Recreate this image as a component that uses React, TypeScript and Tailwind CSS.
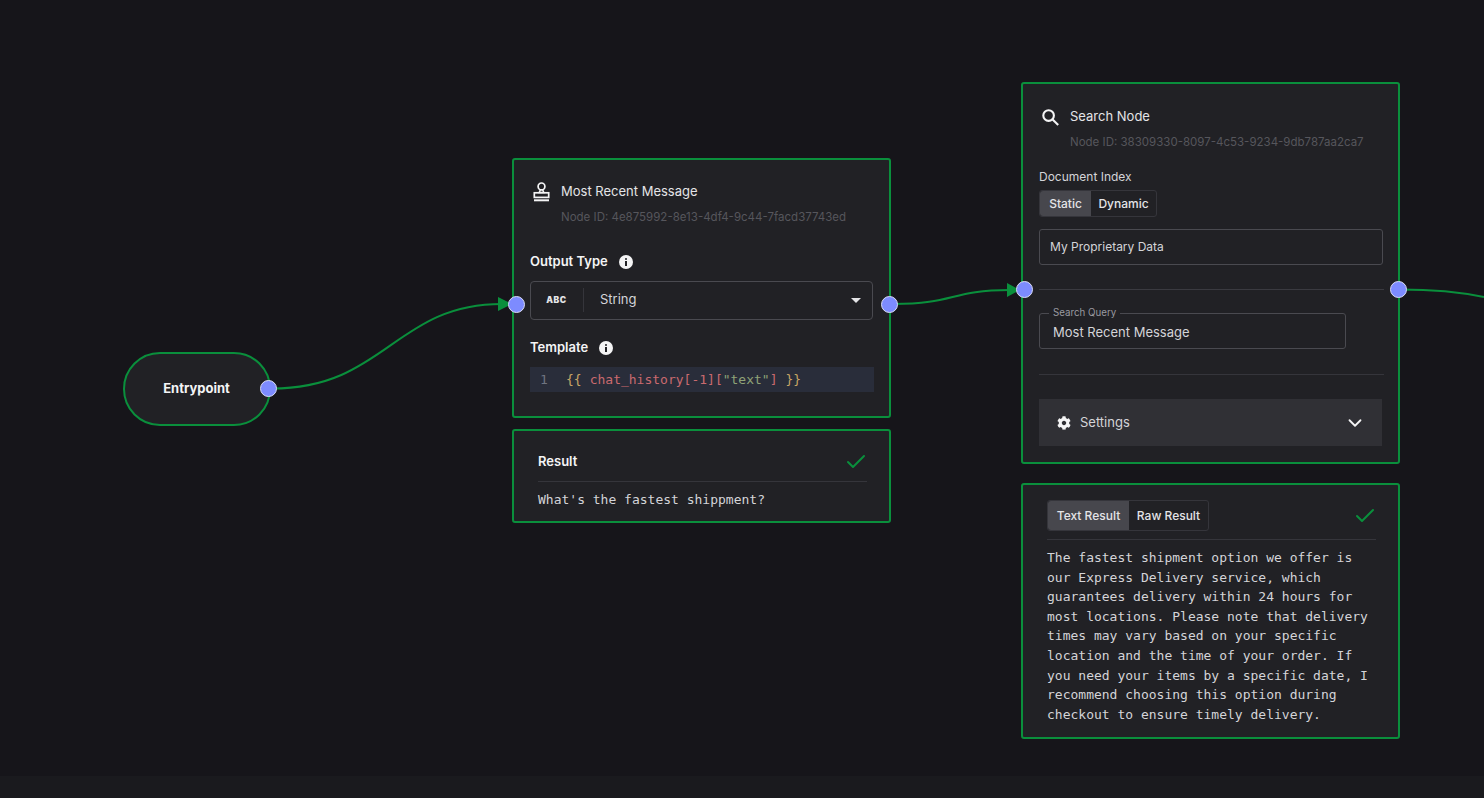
import React from 'react';
import { ChevronDown, Check } from 'lucide-react';
import { FaCog } from 'react-icons/fa';

const UI = 'font-["Inter",sans-serif]';
const MONO = 'font-["DejaVu_Sans_Mono","Liberation_Mono",monospace]';

function Handle({ className }: { className: string }) {
  return (
    <div className={`absolute w-[17px] h-[17px] rounded-full bg-[#7d8bff] border border-[#d9dcf5] ${className}`} />
  );
}

function InfoDot() {
  return (
    <svg width="14" height="14" viewBox="0 0 14 14">
      <circle cx="7" cy="7" r="7" fill="#f4f4f5" />
      <rect x="6" y="6" width="2" height="5" fill="#212125" />
      <rect x="6" y="3" width="2" height="2" rx="1" fill="#212125" />
    </svg>
  );
}

function StampIcon() {
  return (
    <svg width="17" height="20" viewBox="0 0 17 20" fill="none" stroke="#f4f4f5">
      <circle cx="8.5" cy="4.4" r="3.4" strokeWidth="1.7" />
      <path d="M7.5 7.5L6.2 10.4H10.8L9.5 7.5" strokeWidth="1.5" />
      <rect x="1.3" y="10.8" width="14.4" height="4.6" strokeWidth="1.7" />
      <path d="M1 18.3H16" strokeWidth="2" />
    </svg>
  );
}

function SearchIcon() {
  return (
    <svg width="17" height="17" viewBox="0 0 17 17" fill="none" stroke="#f4f4f5" strokeWidth="2.1">
      <circle cx="6.6" cy="6.6" r="5.3" />
      <path d="M10.6 10.6L16.2 16" />
    </svg>
  );
}

function Segmented({ left, right, leftW, rightW, h }: { left: string; right: string; leftW: string; rightW: string; h: string }) {
  return (
    <div className={`flex w-fit rounded-[3px] border border-[#35353b] text-[12px] font-medium text-[#e4e4e7] ${h}`}>
      <div className={`flex items-center justify-center bg-[#47474d] rounded-l-[3px] ${leftW}`}>{left}</div>
      <div className={`flex items-center justify-center ${rightW}`}>{right}</div>
    </div>
  );
}

export default function App() {
  return (
    <div className={`relative w-[1484px] h-[798px] overflow-hidden bg-[#16151a] text-[#e4e4e7] ${UI}`}>
      <div className="absolute left-0 right-0 bottom-0 h-[22px] bg-[#1a1a1e]" />

      {/* edges */}
      <svg className="absolute inset-0" width="1484" height="798" fill="none">
        <path d="M272 388.5C385 388.5 395 304 502 304" stroke="#0a8f3c" strokeWidth="2" />
        <path d="M498 297L512 304L498 311Z" fill="#0a8f3c" />
        <path d="M893 304C955 304 950 290 1010 290" stroke="#0a8f3c" strokeWidth="2" />
        <path d="M1007 283L1020 290L1007 297Z" fill="#0a8f3c" />
        <path d="M1400 289.5C1435 289.5 1460 292 1484 297" stroke="#0a8f3c" strokeWidth="2" />
      </svg>

      {/* entrypoint */}
      <div className="absolute left-[123px] top-[352px] w-[148px] h-[74px] rounded-[37px] border-2 border-[#0a8f3c] bg-[#212125] flex items-center justify-center text-[13px] font-bold text-[#f4f4f5]">
        <span className="mr-px">Entrypoint</span>
      </div>
      <Handle className="left-[260px] top-[380px]" />

      {/* most recent message */}
      <div className="absolute left-[512px] top-[158px] w-[379px] h-[260px] rounded-[3px] border-2 border-[#0a8f3c] bg-[#212125] pt-[21px] px-[16px]">
        <div className="flex items-center h-[22px]">
          <div className="w-[31px] pl-[3px] flex items-center"><StampIcon /></div>
          <span className="text-[13px] text-[#e4e4e7]">Most Recent Message</span>
        </div>
        <div className="ml-[31px] mt-[6px] text-[11.5px] leading-[16px] text-[#56565c] whitespace-nowrap">Node ID: 4e875992-8e13-4df4-9c44-7facd37743ed</div>
        <div className="flex items-center gap-[11px] mt-[27px] h-[20px] text-[13px] font-semibold text-[#f4f4f5]">
          Output Type <InfoDot />
        </div>
        <div className="flex items-center mt-[9px] w-[343px] h-[39px] pb-px rounded-[4px] border border-[#4a4a50]">
          <div className="w-[52px] flex justify-center pr-px text-[8.5px] font-black tracking-[0.5px] text-[#e4e4e7]">ABC</div>
          <div className="w-px h-[24px] bg-[#35353b]" />
          <span className="ml-[16px] text-[13px] text-[#d4d4d8]">String</span>
          <svg className="ml-auto mr-[11px]" width="10" height="5" viewBox="0 0 10 5"><path d="M0 0H10L5 5Z" fill="#e4e4e7" /></svg>
        </div>
        <div className="flex items-center gap-[11px] mt-[18px] h-[20px] text-[13px] font-semibold text-[#f4f4f5]">
          Template <InfoDot />
        </div>
        <div className={`flex items-center mt-[9px] w-[344px] h-[25px] bg-[#292d3a] text-[13px] whitespace-nowrap ${MONO}`}>
          <span className="ml-[10px] w-[26px] text-[#6f7480]">1</span>
          <span className="text-[#c7a565]">{'{{'}</span>
          <span className="ml-[8px] text-[#c96a6f]">chat_history[-1][</span>
          <span className="text-[#8fa377]">"text"</span>
          <span className="text-[#c96a6f]">]</span>
          <span className="ml-[8px] text-[#c7a565]">{'}}'}</span>
        </div>
      </div>
      <Handle className="left-[508px] top-[296px]" />
      <Handle className="left-[881px] top-[296px]" />

      {/* result */}
      <div className="absolute left-[512px] top-[429px] w-[379px] h-[94px] rounded-[3px] border-2 border-[#0a8f3c] bg-[#212125] pl-[24px] pr-[22px] pt-[19px]">
        <div className="flex items-center justify-between h-[24px] pb-px">
          <span className="text-[13px] font-semibold text-[#f4f4f5]">Result</span>
          <Check size={24} strokeWidth={2} className="text-[#0a8f3c] mr-[-1px]" />
        </div>
        <div className="mt-[7px] h-px bg-[#35353b]" />
        <div className={`mt-[9px] text-[13px] leading-[18px] text-[#d4d4d8] whitespace-nowrap ${MONO}`}>What's the fastest shippment?</div>
      </div>

      {/* search node */}
      <div className="absolute left-[1021px] top-[82px] w-[379px] h-[382px] rounded-[3px] border-2 border-[#0a8f3c] bg-[#212125] pt-[22px] px-[16px]">
        <div className="flex items-center h-[22px]">
          <div className="w-[31px] pl-[3px] flex items-center"><SearchIcon /></div>
          <span className="text-[13px] text-[#e4e4e7]">Search Node</span>
        </div>
        <div className="ml-[31px] mt-[6px] text-[11.5px] leading-[16px] text-[#56565c] whitespace-nowrap">Node ID: 38309330-8097-4c53-9234-9db787aa2ca7</div>
        <div className="mt-[18px] h-[18px] text-[12px] leading-[18px] text-[#d4d4d8]">Document Index</div>
        <div className="mt-[4px]">
          <Segmented left="Static" right="Dynamic" leftW="w-[51px]" rightW="w-[65px]" h="h-[27px]" />
        </div>
        <div className="flex items-center mt-[12px] w-[344px] h-[36px] rounded-[3px] border border-[#4a4a50] pl-[10px] text-[12px] text-[#d4d4d8]">My Proprietary Data</div>
        <div className="mt-[24px] w-[345px] h-px bg-[#3a3a40]" />
        <fieldset className="mt-[18px] w-[307px] h-[41px] rounded-[3px] border border-[#4a4a50] pl-[9px]">
          <legend className="px-[4px] text-[9.75px] leading-[10px] text-[#9a9aa0]">Search Query</legend>
          <div className="pl-[4px] pt-[4px] text-[13px] leading-[20px] text-[#d4d4d8]">Most Recent Message</div>
        </fieldset>
        <div className="mt-[25px] w-[345px] h-px bg-[#35353b]" />
        <div className="flex items-center mt-[24px] w-[343px] h-[47px] bg-[#303035] px-[18px] text-[13px] text-[#d4d4d8]">
          <FaCog size={14} className="text-[#f4f4f5] mr-[9px]" />
          Settings
          <ChevronDown size={22} strokeWidth={2} className="ml-auto mr-[-2px] text-[#f4f4f5]" />
        </div>
      </div>
      <Handle className="left-[1016px] top-[281px]" />
      <Handle className="left-[1390px] top-[281px]" />

      {/* search result */}
      <div className="absolute left-[1021px] top-[483px] w-[379px] h-[256px] rounded-[3px] border-2 border-[#0a8f3c] bg-[#212125] pl-[24px] pr-[22px] pt-[15px]">
        <div className="flex items-center justify-between">
          <Segmented left="Text Result" right="Raw Result" leftW="w-[81px]" rightW="w-[79px]" h="h-[31px]" />
          <Check size={24} strokeWidth={2} className="text-[#0a8f3c] mr-[-1px]" />
        </div>
        <div className="mt-[8px] h-px bg-[#35353b]" />
        <div className={`mt-[8px] text-[13px] leading-[19.6px] text-[#d4d4d8] whitespace-nowrap ${MONO}`}>
          <div>The fastest shipment option we offer is</div>
          <div>our Express Delivery service, which</div>
          <div>guarantees delivery within 24 hours for</div>
          <div>most locations. Please note that delivery</div>
          <div>times may vary based on your specific</div>
          <div>location and the time of your order. If</div>
          <div>you need your items by a specific date, I</div>
          <div>recommend choosing this option during</div>
          <div>checkout to ensure timely delivery.</div>
        </div>
      </div>
    </div>
  );
}
